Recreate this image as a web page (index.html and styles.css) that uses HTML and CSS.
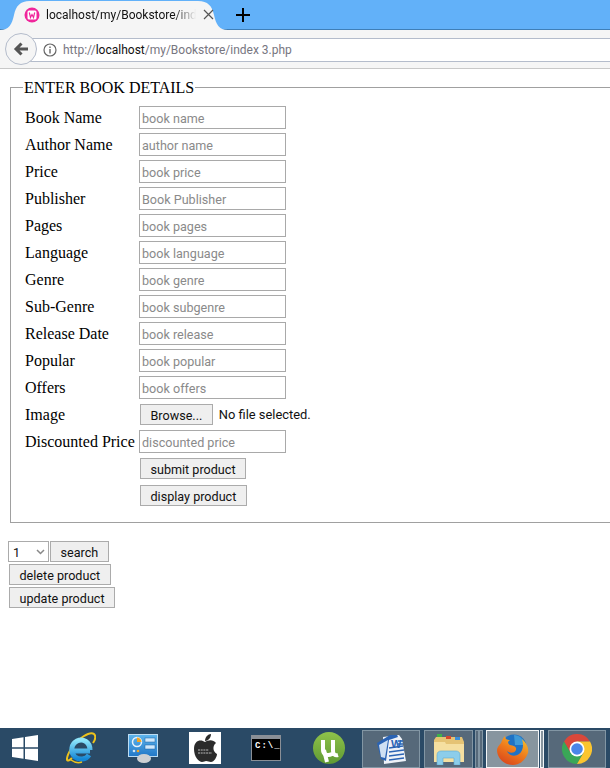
FILE: index.html
```html
<!DOCTYPE html>
<html lang="en">
<head>
  <meta charset="UTF-8" />
  <title>localhost/my/Bookstore/index 3.php</title>
  <link rel="stylesheet" href="styles.css">
</head>
<body>
  <div class="tabstrip">
    <div class="tab">
      <svg class="tab-shape" width="228" height="30" viewBox="0 0 228 30"><path d="M0 30C9 30 12 24 14 15C16 6 20 1 30 1H198C208 1 212 6 214 15C216 24 219 30 228 30Z" fill="#f5f5f5"/></svg>
      <svg class="favicon" width="16" height="16" viewBox="0 0 16 16"><circle cx="8" cy="8" r="7.500" fill="#f0269b"/><rect x="3.500" y="3.500" width="9" height="9" rx="1.500" fill="#fff"/><path d="M5.300 5.500L6.500 10.500L8 7.500L9.500 10.500L10.700 5.500" fill="none" stroke="#f0269b" stroke-width="1.200"/></svg>
      <span class="tab-title">localhost/my/Bookstore/ind</span>
      <svg class="tab-close" width="11" height="11" viewBox="0 0 11 11"><path d="M1 1L10 10M10 1L1 10" stroke="#555" stroke-width="1.200"/></svg>
    </div>
    <svg class="new-tab" width="16" height="16" viewBox="0 0 16 16"><path d="M8 1V15M1 8H15" stroke="#000" stroke-width="2"/></svg>
  </div>

  <div class="toolbar">
    <div class="back">
      <svg width="16" height="16" viewBox="0 0 16 16"><path d="M15 8H4M8.500 2.500L3 8L8.500 13.500" fill="none" stroke="#555" stroke-width="3"/></svg>
    </div>
    <div class="urlbar">
      <svg class="info" width="14" height="14" viewBox="0 0 14 14"><circle cx="7" cy="7" r="6" fill="none" stroke="#666" stroke-width="1.200"/><path d="M7 6V10.500M7 3.500V5" stroke="#666" stroke-width="1.400"/></svg>
      <span class="url">http://<b>localhost</b>/my/Bookstore/index 3.php</span>
    </div>
  </div>

  <div class="page">
    <form>
      <fieldset class="details">
        <legend>ENTER BOOK DETAILS</legend>
        <div class="form-grid">
          <label>Book Name</label><input type="text" placeholder="book name" />
          <label>Author Name</label><input type="text" placeholder="author name" />
          <label>Price</label><input type="text" placeholder="book price" />
          <label>Publisher</label><input type="text" placeholder="Book Publisher" />
          <label>Pages</label><input type="text" placeholder="book pages" />
          <label>Language</label><input type="text" placeholder="book language" />
          <label>Genre</label><input type="text" placeholder="book genre" />
          <label>Sub-Genre</label><input type="text" placeholder="book subgenre" />
          <label>Release Date</label><input type="text" placeholder="book release" />
          <label>Popular</label><input type="text" placeholder="book popular" />
          <label>Offers</label><input type="text" placeholder="book offers" />
          <label>Image</label>
          <div class="file-row"><button type="button" class="btn">Browse...</button><span>No file selected.</span></div>
          <label>Discounted Price</label><input type="text" placeholder="discounted price" />
          <span></span><div><button type="button" class="btn">submit product</button></div>
          <span></span><div><button type="button" class="btn">display product</button></div>
        </div>
      </fieldset>
    </form>

    <div class="search-row">
      <div class="select-box">1<svg width="9" height="6" viewBox="0 0 9 6"><path d="M1 1L4.500 4.500L8 1" fill="none" stroke="#888" stroke-width="1.500"/></svg></div>
      <button type="button" class="btn">search</button>
    </div>
    <div class="action-row"><button type="button" class="btn">delete product</button></div>
    <div class="action-row"><button type="button" class="btn">update product</button></div>
  </div>

  <div class="taskbar">
    <div class="slot slot-win">
      <svg width="26" height="26" viewBox="0 0 26 26"><path d="M0 4L11.500 2.300V12.300H0ZM13 2.100L26 0V12.300H13ZM0 13.800H11.500V23.700L0 22ZM13 13.800H26V26L13 24Z" fill="#fff"/></svg>
    </div>
    <div class="slot slot-ie">
      <svg width="30" height="32" viewBox="0 0 30 32">
        <defs><linearGradient id="ieBlue" x1="0" y1="0" x2="0" y2="1"><stop offset="0" stop-color="#8fe6fb"/><stop offset="1" stop-color="#1487d6"/></linearGradient></defs>
        <path d="M6 26C0 32 -1 27 5 17C12 6 24 -1 28 2C30 4 29 8 27 11" fill="none" stroke="#eec21c" stroke-width="2"/>
        <path d="M24 19H8M23 23C20 28 13 28 9 25C4 20 5 12 11 9C17 6 24 10 24 18" fill="none" stroke="url(#ieBlue)" stroke-width="5"/>
        <path d="M5 28C9 31 13 31 16 30" fill="none" stroke="#eec21c" stroke-width="1.500"/>
      </svg>
    </div>
    <div class="slot slot-panel">
      <svg width="30" height="29" viewBox="0 0 30 29">
        <defs><linearGradient id="panelBlue" x1="0" y1="0" x2="0" y2="1"><stop offset="0" stop-color="#5db4ec"/><stop offset="1" stop-color="#2379c8"/></linearGradient></defs>
        <rect x="0" y="0" width="30" height="23" fill="#bcdcf2"/>
        <rect x="1" y="1" width="28" height="21" fill="url(#panelBlue)"/>
        <circle cx="9" cy="8" r="4.500" fill="none" stroke="#e8f2fa" stroke-width="1.500"/>
        <path d="M9 8V3.500A4.500 4.500 0 0 1 13.500 8Z" fill="#f5a623"/>
        <rect x="17" y="4" width="10" height="4" fill="#cfe8fb" stroke="#1c5f9e" stroke-width="0.500"/>
        <rect x="17" y="11" width="10" height="4" fill="#cfe8fb" stroke="#1c5f9e" stroke-width="0.500"/>
        <circle cx="6" cy="17" r="1.300" fill="#cfe8fb"/><circle cx="10" cy="17" r="1.300" fill="#f5a623"/>
        <ellipse cx="16" cy="24.500" rx="7" ry="4.500" fill="#cdd0d3"/>
      </svg>
    </div>
    <div class="slot slot-apple">
      <div class="apple-tile">
        <svg width="26" height="30" viewBox="0 0 26 30">
          <path d="M13 9C9 6 2 7 2 16C2 24 7 29 10 29C12 29 13 28 14 28C16 28 17 29 19 29C22 29 25 24 25 21C21 19 20 13 24 10C21 6 16 7 13 9Z" fill="#2b2b2b"/>
          <path d="M13 8C13 4 16 1 19 1C19 5 16 8 13 8Z" fill="#2b2b2b"/>
          <path d="M6 17H17M6 20H20" stroke="#bbb" stroke-width="1" stroke-dasharray="2 0.700"/>
        </svg>
      </div>
    </div>
    <div class="slot slot-cmd">
      <div class="cmd-tile"><span class="cmd-text">C:\_</span></div>
    </div>
    <div class="slot slot-torrent">
      <svg width="32" height="32" viewBox="0 0 32 32">
        <defs><linearGradient id="utGreen" x1="0" y1="0" x2="0" y2="1"><stop offset="0" stop-color="#8fc24a"/><stop offset="1" stop-color="#5f9a33"/></linearGradient></defs>
        <circle cx="16" cy="16" r="16" fill="url(#utGreen)"/>
        <path d="M10 8V18C10 23 15 24 19 22M20 8V19C20 22 22 24 25 23" fill="none" stroke="#fff" stroke-width="4"/>
        <path d="M11 18L14 30" stroke="#fff" stroke-width="4"/>
      </svg>
    </div>
    <div class="tile tile-word">
      <svg width="30" height="30" viewBox="0 0 30 30">
        <path d="M7 3L23 1L26 5L30 27L8 30Z" fill="#eef2f8"/>
        <path d="M1 9L14 1H21L22 3L13 6L10 27L5 25Z" fill="#2a63b4"/>
        <path d="M3 11L12 6L9 24L5 23Z" fill="#cfe0f3"/>
        <path d="M13 14L27 12M13 18L28 16M13 22L28 20M13 26L28 24" stroke="#2a63b4" stroke-width="1.600"/>
        <path d="M22 7H27M22 10H27" stroke="#2a63b4" stroke-width="1.600"/>
      </svg>
      <span class="word-w">W</span>
    </div>
    <div class="tile tile-files">
      <svg width="32" height="31" viewBox="0 0 32 31">
        <path d="M1 6L3 3H29L31 8V27H1Z" fill="#e5c374"/>
        <rect x="4" y="0" width="5" height="3" fill="#3fb04a"/>
        <rect x="13" y="2" width="5" height="3" fill="#d8482d"/>
        <rect x="22" y="3" width="5" height="3" fill="#3b8fd8"/>
        <path d="M1 8H12L13 10H31V28H1Z" fill="#f5dfa0"/>
        <path d="M4 31V21C4 18 6 17 8 17H23C25 17 27 18 27 21V31H21V24H10V31Z" fill="#8ccdea" stroke="#5da9d0" stroke-width="0.600"/>
      </svg>
    </div>
    <div class="tile-edge tile-edge-first"></div>
    <div class="tile-edge"></div>
    <div class="tile tile-firefox">
      <svg width="32" height="32" viewBox="0 0 32 32">
        <defs><linearGradient id="foxOrange" x1="0.800" y1="0" x2="0.200" y2="1"><stop offset="0" stop-color="#f6c02c"/><stop offset="0.500" stop-color="#ee7a1c"/><stop offset="1" stop-color="#d8431c"/></linearGradient></defs>
        <circle cx="17" cy="14" r="12.500" fill="#1f72c4"/>
        <path d="M17 2C22 2 27 6 28 12L18 12Z" fill="#3f9ad8"/>
        <path d="M4 10C5 7 6 5 8 3C8 6 10 7 13 7C10 9 11 11 13 12C16 13 20 13 19 17C17 21 12 20 10 18C12 23 18 24 22 21C26 18 27 12 25 6C30 10 32 16 31 20C28 28 22 32 16 32C7 32 0 25 0 17C0 15 2 12 4 10Z" fill="url(#foxOrange)"/>
      </svg>
    </div>
    <div class="tile-edge tile-edge-active"></div>
    <div class="tile tile-chrome">
      <svg width="30" height="30" viewBox="0 0 30 30">
        <path d="M2 7.500A15 15 0 0 1 28 7.500H15L8.500 18.750Z" fill="#d9483b"/>
        <path d="M2 7.500A15 15 0 0 0 15 30L21.500 18.750H8.500Z" fill="#3aa757"/>
        <path d="M28 7.500A15 15 0 0 1 15 30L21.500 18.750L15 7.500Z" fill="#fbc52f"/>
        <circle cx="15" cy="15" r="7.500" fill="#fff"/>
        <circle cx="15" cy="15" r="5.800" fill="#4a86e8"/>
      </svg>
    </div>
  </div>
</body>
</html>
```

FILE: styles.css
```css
:root {
  --ui-font: Roboto, "Noto Sans", sans-serif;
  --blue: #62b1f9;
  --chrome: #f5f5f5;
  --task: #2a4a66;
}
* {
  box-sizing: border-box;
}
html, body {
  height: 100%;
}
body {
  margin: 0;
  display: flex;
  flex-direction: column;
  overflow: hidden;
  background: white;
  font-family: "Liberation Serif", serif;
  font-size: 16px;
}

/* === Browser chrome === */
.tabstrip {
  height: 30px;
  flex-shrink: 0;
  display: flex;
  align-items: center;
  background: var(--blue);
  border-bottom: 1px solid #3f7fb8;
}
.tab {
  position: relative;
  width: 228px;
  height: 30px;
  display: flex;
  align-items: center;
  padding-left: 24px;
  flex-shrink: 0;
}
.tab-shape {
  position: absolute;
  left: 0;
  top: 0;
}
.favicon, .tab-title, .tab-close {
  position: relative;
}
.tab-title {
  width: 150px;
  margin-left: 6px;
  white-space: nowrap;
  font: 12px var(--ui-font);
  color: #111;
  -webkit-mask-image: linear-gradient(to right, black 85%, transparent);
  mask-image: linear-gradient(to right, black 85%, transparent);
}
.tab-close {
  margin-left: 7px;
}
.new-tab {
  margin-left: 7px;
}
.toolbar {
  height: 39px;
  flex-shrink: 0;
  display: flex;
  align-items: center;
  background: var(--chrome);
  border-bottom: 1px solid #c8c8c8;
  position: relative;
}
.back {
  position: absolute;
  left: 5px;
  top: 3px;
  width: 32px;
  height: 32px;
  display: flex;
  align-items: center;
  justify-content: center;
  border: 1px solid #b4bccb;
  border-radius: 50%;
  background: var(--chrome);
}
.urlbar {
  margin: 1px 0 0 30px;
  flex: 1;
  height: 24px;
  display: flex;
  align-items: center;
  padding-left: 13px;
  background: white;
  border-top: 1px solid #b4bccb;
  border-bottom: 1px solid #b4bccb;
}
.url {
  margin-left: 6px;
  font: 12px var(--ui-font);
  color: #77767f;
}
.url b {
  font-weight: normal;
  color: #111;
}

/* === Page === */
.page {
  flex: 1;
  padding: 8px 8px 0;
  overflow: hidden;
}
.details {
  margin: 0 -30px 0 2px;
  width: 640px;
  height: 446px;
  padding: 7px 0 0 14px;
  border: 1px solid #a0a0a0;
}
.details legend {
  padding: 2px 1px 0;
  margin-left: -2px;
}
.form-grid {
  display: grid;
  grid-template-columns: 114px 1fr;
  grid-auto-rows: 27px;
  align-items: center;
}
.form-grid label {
  line-height: 23px;
}
.form-grid input {
  width: 147px;
  height: 23px;
  padding: 2px 2px 0;
  border: 1px solid #a9a9a9;
  font: 12.6px var(--ui-font);
  background: white;
}
.form-grid input::placeholder {
  color: #8a8a8a;
  opacity: 1;
}
.btn {
  height: 21px;
  padding: 2px 9.5px 0;
  border: 1px solid #ababab;
  border-radius: 0;
  background: #efefef;
  font: 12.6px var(--ui-font);
  color: #111;
  line-height: 18px;
}
.form-grid .btn {
  margin-left: 1px;
}
.file-row {
  display: flex;
  align-items: center;
  gap: 6px;
  font: 12.9px var(--ui-font);
  color: #111;
}
.search-row {
  display: flex;
  gap: 1px;
  margin-top: 18px;
}
.select-box {
  width: 41px;
  height: 21px;
  display: flex;
  align-items: center;
  justify-content: space-between;
  padding: 1px 3px 0 4px;
  border: 1px solid #ababab;
  background: white;
  font: 12.6px var(--ui-font);
  color: #111;
}
.action-row {
  margin: 2px 0 0 1px;
}

/* === Taskbar === */
.taskbar {
  height: 40px;
  flex-shrink: 0;
  display: flex;
  align-items: center;
  background: var(--task);
}
.slot {
  height: 40px;
  display: flex;
  align-items: center;
  justify-content: center;
  flex-shrink: 0;
}
.slot-win { width: 50px; }
.slot-ie { width: 62px; }
.slot-panel { width: 62px; }
.slot-apple { width: 62px; }
.slot-cmd { width: 60px; }
.slot-torrent { width: 66px; }
.apple-tile {
  width: 32px;
  height: 32px;
  display: flex;
  align-items: center;
  justify-content: center;
  background: white;
}
.cmd-tile {
  width: 30px;
  height: 26px;
  background: black;
  border: 1px solid #8a8f96;
  border-top-width: 4px;
  color: white;
  font: bold 9px "Liberation Mono", monospace;
  letter-spacing: 1px;
  padding: 2px 0 0 3px;
}
.tile {
  position: relative;
  height: 38px;
  margin-top: 2px;
  display: flex;
  align-items: center;
  justify-content: center;
  flex-shrink: 0;
  background: #56697a;
  border: 1px solid #8296a4;
}
.tile-word { width: 58px; margin-right: 4px; }
.tile-files { width: 49px; }
.tile-firefox {
  width: 53px;
  margin-left: 3px;
  background: #87959f;
  border: 1px solid #f2f5f7;
}
.tile-chrome { width: 58px; margin-left: 4px; }
.tile-edge {
  width: 4px;
  height: 38px;
  margin-top: 2px;
  flex-shrink: 0;
  border: 1px solid #8296a4;
  background: #56697a;
}
.tile-edge-first {
  margin-left: 2px;
}
.tile-edge-active {
  margin-left: 1px;
  border-color: #f2f5f7;
  background: #87959f;
}
.word-w {
  position: absolute;
  left: 28px;
  top: 7px;
  font: bold 11px "Liberation Sans", sans-serif;
  color: #2a63b4;
}
```
